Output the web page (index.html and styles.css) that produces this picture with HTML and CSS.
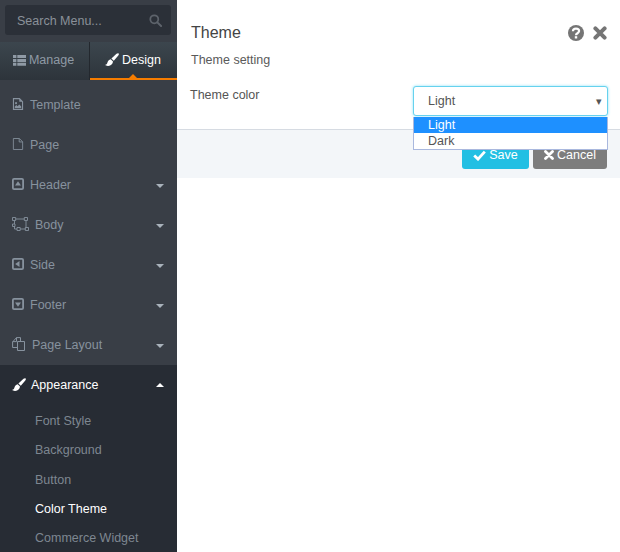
FILE: index.html
```html
<!DOCTYPE html>
<html lang="en">
<head>
<meta charset="utf-8">
<title>Theme</title>
<link rel="stylesheet" href="styles.css">
</head>
<body>
<div class="app">
  <aside class="sidebar">
    <div class="search-wrap">
      <div class="search">
        <span class="search-text">Search Menu...</span>
        <svg class="search-icon" viewBox="0 0 14 14"><circle cx="5.7" cy="5.7" r="4.3" fill="none" stroke="currentColor" stroke-width="1.9"/><path d="M9 9l4 4" stroke="currentColor" stroke-width="2.2" stroke-linecap="round"/></svg>
      </div>
    </div>
    <div class="tabs">
      <div class="tab tab-manage">
        <svg class="tab-icon" viewBox="0 0 13 11"><path fill="currentColor" d="M0 0h3.4v3H0zM4.3 0H13v3H4.3zM0 3.9h3.4v3H0zM4.3 3.9H13v3H4.3zM0 7.8h3.4v3H0zM4.3 7.8H13v3H4.3z"/></svg>
        <span>Manage</span>
      </div>
      <div class="tab tab-design">
        <svg class="tab-icon brush" viewBox="0 0 14 14"><path fill="currentColor" d="M13.6.4c.5.5.3 1.300-.3 2L8.800 7.800 6.400 5.500 11.500.8c.8-.6 1.600-.9 2.100-.4zM5.700 6.200l2.300 2.300c-.2 2.300-2 4.300-4.800 4.400-1.300.1-2.500-.4-3.200-1.100 1.300-.1 2-.6 2.300-1.800.3-2 1.800-3.500 3.400-3.800z"/></svg>
        <span>Design</span>
      </div>
    </div>
    <nav class="menu">
      <div class="item">
        <svg class="icon" viewBox="0 0 12 14"><path fill="none" stroke="currentColor" stroke-width="1.300" d="M.7.7h7l3.600 3.600v9H.7z"/><path fill="currentColor" d="M7.500.700v3.800h3.800zM2.200 11.700V10l1.800-1.800 1.500 1.400 2-2.100 2.300 2.300v1.900z"/><circle cx="3.700" cy="6" r="1.200" fill="currentColor"/></svg>
        <span class="label">Template</span>
      </div>
      <div class="item">
        <svg class="icon" viewBox="0 0 12 14"><path fill="none" stroke="currentColor" stroke-width="1" d="M.6.600h7l3.800 3.800v9H.6zM7.400.600v4h4"/></svg>
        <span class="label">Page</span>
      </div>
      <div class="item has-caret">
        <svg class="icon" viewBox="0 0 12 12"><rect x=".9" y=".9" width="10.200" height="10.200" rx="1.200" fill="none" stroke="currentColor" stroke-width="1.800"/><path fill="currentColor" d="M6 3.200 9 7.500H3z"/></svg>
        <span class="label">Header</span>
        <i class="caret"></i>
      </div>
      <div class="item has-caret">
        <svg class="icon icon-wide" viewBox="0 0 17 14"><path fill="none" stroke="currentColor" stroke-width=".9" d="M2.500 2h11.500v10H2.500z"/><path fill="#393e46" stroke="currentColor" stroke-width=".9" d="M.5.500h3.200v3H.5zM12.300.500h3.200v3h-3.200zM.5 7h2.500v2.500H.5zM5 10.500h3.200v3H5zM13.300 10.500h3.200v3h-3.200z"/></svg>
        <span class="label">Body</span>
        <i class="caret"></i>
      </div>
      <div class="item has-caret">
        <svg class="icon" viewBox="0 0 12 12"><rect x=".9" y=".9" width="10.200" height="10.200" rx="1.200" fill="none" stroke="currentColor" stroke-width="1.800"/><path fill="currentColor" d="M3.200 6 7.500 3v6z"/></svg>
        <span class="label">Side</span>
        <i class="caret"></i>
      </div>
      <div class="item has-caret">
        <svg class="icon" viewBox="0 0 12 12"><rect x=".9" y=".9" width="10.200" height="10.200" rx="1.200" fill="none" stroke="currentColor" stroke-width="1.800"/><path fill="currentColor" d="M6 8.800 3 4.500h6z"/></svg>
        <span class="label">Footer</span>
        <i class="caret"></i>
      </div>
      <div class="item has-caret">
        <svg class="icon icon-layout" viewBox="0 0 13 14"><path fill="none" stroke="currentColor" stroke-width="1" d="M5.500 4.500h7v9h-7zM5.500 10.500H.6V5L4.500.6h4v3.900M4.500.6v4H.6"/></svg>
        <span class="label label-layout">Page Layout</span>
        <i class="caret"></i>
      </div>
      <div class="item item-open">
        <svg class="icon brush" viewBox="0 0 14 14"><path fill="currentColor" d="M13.600.4c.5.5.3 1.300-.3 2L8.800 7.800 6.400 5.500 11.500.8c.8-.6 1.600-.9 2.100-.4zM5.700 6.200l2.300 2.300c-.2 2.300-2 4.300-4.800 4.400-1.300.1-2.500-.4-3.200-1.100 1.300-.1 2-.6 2.300-1.800.3-2 1.800-3.500 3.400-3.800z"/></svg>
        <span class="label">Appearance</span>
        <i class="caret caret-up"></i>
      </div>
      <ul class="submenu">
        <li>Font Style</li>
        <li>Background</li>
        <li>Button</li>
        <li class="current">Color Theme</li>
        <li>Commerce Widget</li>
      </ul>
    </nav>
  </aside>
  <main class="panel">
    <div class="panel-body">
      <header class="panel-head">
        <h1>Theme</h1>
        <div class="head-icons">
          <svg class="help" viewBox="0 0 16 16"><circle cx="8" cy="8" r="8" fill="currentColor"/><path fill="none" stroke="#fff" stroke-width="2.200" d="M4.900 6.200c.1-1.700 1.400-2.500 3.100-2.500s3.100.9 3.100 2.400c0 2.200-3.100 2-3.100 4.100"/><rect x="6.800" y="11.200" width="2.400" height="2.300" fill="#fff"/></svg>
          <svg class="close" viewBox="0 0 14 14"><path fill="none" stroke="currentColor" stroke-width="4" stroke-linecap="round" d="M2.400 2.400l9.200 9.200M11.600 2.400l-9.200 9.200"/></svg>
        </div>
      </header>
      <p class="subtitle">Theme setting</p>
      <div class="field">
        <label>Theme color</label>
        <div class="select-box">
          <div class="select"><span>Light</span><i class="select-arrow">▾</i></div>
          <ul class="options">
            <li class="selected">Light</li>
            <li>Dark</li>
          </ul>
        </div>
      </div>
    </div>
    <footer class="panel-foot">
      <button class="btn btn-save">
        <svg class="btn-icon" viewBox="0 0 13 11"><path fill="none" stroke="currentColor" stroke-width="2.800" d="M1.200 5.500l3.800 3.600 6.800-7.500"/></svg>Save
      </button>
      <button class="btn btn-cancel">
        <svg class="btn-icon btn-x" viewBox="0 0 10 10"><path fill="none" stroke="currentColor" stroke-width="2.800" stroke-linecap="round" d="M1.500 1.500l7 7M8.500 1.500l-7 7"/></svg>Cancel
      </button>
    </footer>
  </main>
</div>
</body>
</html>
```

FILE: styles.css
```css
* { box-sizing: border-box; }
html, body { margin: 0; padding: 0; height: 100%; background: #fff; }
body { font-family: "Liberation Sans", Arial, sans-serif; font-size: 12.5px; overflow: hidden; }
.app { display: flex; width: 620px; height: 552px; }

.sidebar { width: 177px; height: 552px; flex: none; background: #393e46; overflow: hidden; }
.search-wrap { padding: 5px 6px 7px 5px; }
.search { height: 30px; background: #2b3038; border-radius: 3px; display: flex; align-items: center; justify-content: space-between; padding: 0 9px 0 12px; color: #8a9099; }
.search-text { margin-top: 2px; }
.search-icon { width: 13px; height: 13px; color: #5d636b; }

.tabs { display: flex; height: 38px; background: linear-gradient(#3c464e, #2d343b); }
.tab { display: flex; align-items: center; justify-content: center; gap: 3px; height: 38px; padding-bottom: 2px; }
.tab-manage { width: 90px; color: #8f9aa5; border-right: 1px solid #23282e; padding-right: 2px; }
.tab-design { width: 87px; color: #fff; border-bottom: 2px solid #f57c00; position: relative; padding: 0 1px 0 0; }
.tab-design::after { content: ""; position: absolute; left: 39px; bottom: 0; border: 4px solid transparent; border-top: 0; border-bottom-color: #f57c00; }
.tab-icon { width: 13px; height: 11px; flex: none; }
.tab-icon.brush { width: 14px; height: 14px; }

.item { height: 40px; display: flex; align-items: center; padding: 0 12px; color: #87929e; position: relative; }
.item:first-child { margin-top: 4px; }
.icon { width: 12px; height: 12px; flex: none; }
.icon-wide { width: 17px; height: 14px; }
.icon-layout { width: 13px; height: 14px; }
.label { margin: 2px 0 0 6px; }
.label-layout { margin-left: 7px; }
.caret { position: absolute; right: 13px; top: 20px; border-style: solid; border-color: transparent; border-width: 4px 4.5px 0; border-top-color: #a9b2bb; }
.item-open { background: #272c34; color: #fff; height: 39px; margin-top: 1px; }
.item-open .brush { width: 14px; height: 14px; }
.item-open .label { margin: 0 0 0 5px; }
.item-open .caret { top: 18px; }
.caret-up { border-width: 0 4.5px 4px; border-bottom-color: #fff; border-top-color: transparent; }

.submenu { list-style: none; margin: 0; padding: 3px 0 0; background: #272c34; height: 148px; color: #7e8791; }
.submenu li { height: 29.3px; line-height: 29.3px; padding-left: 35px; }
.submenu .current { color: #fff; }

.panel { flex: 1; min-width: 0; align-self: flex-start; }
.panel-body { height: 129px; padding: 24px 12px 0 14px; background: #fff; }
.panel-head { display: flex; justify-content: space-between; align-items: center; height: 18px; }
.panel-head h1 { margin: 0; font-size: 16px; font-weight: 400; color: #444; }
.head-icons { display: flex; gap: 9px; align-items: center; color: #757575; }
.help { width: 16px; height: 16px; }
.close { width: 14px; height: 14px; margin-right: 1px; }
.subtitle { margin: 11px 0 0; color: #5a5a5a; line-height: 15px; }
.field { display: flex; justify-content: space-between; margin-top: 20px; }
.field label { color: #555; line-height: 15px; margin-left: -1px; }
.select-box { width: 195px; position: relative; margin-top: -2px; }
.select { height: 30px; border: 1px solid #66d2ee; border-radius: 3px; box-shadow: 0 0 3px #8ae0f5; background: #fff; display: flex; justify-content: space-between; align-items: center; padding: 0 5px 0 14px; color: #555; }
.select-arrow { font-style: normal; font-size: 11px; color: #555; }
.options { list-style: none; margin: 0; padding: 0; position: absolute; left: 0; top: 31px; width: 195px; background: #fff; border: 1px solid #a9b8de; border-top: 0; color: #555; line-height: 16px; z-index: 2; }
.options li { height: 16px; padding-left: 14px; }
.options .selected { background: #1e90ff; color: #fff; }

.panel-foot { height: 49px; background: #f3f6f9; border-top: 1px solid #d6dbe2; display: flex; justify-content: flex-end; gap: 4px; padding: 0 13px 9px 0; align-items: flex-end; }
.btn { font: inherit; border: 0; border-radius: 3px; height: 30px; color: #fff; display: flex; align-items: center; justify-content: center; gap: 3px; padding: 2px 0 0; }
.btn-save { width: 67px; background: #22bfe3; }
.btn-cancel { width: 74px; background: #7d7d7d; }
.btn-icon { width: 13px; height: 11px; }
.btn-x { width: 10px; height: 10px; }
```
